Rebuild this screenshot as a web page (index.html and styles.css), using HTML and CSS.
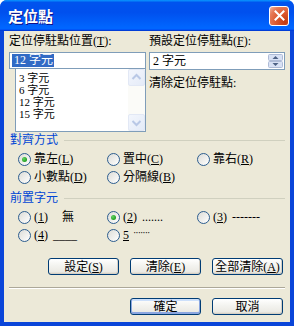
FILE: index.html
```html
<!DOCTYPE html>
<html lang="zh-Hant">
<head>
  <meta charset="UTF-8">
  <title>定位點</title>
  <link rel="stylesheet" href="styles.css">
</head>
<body>

  <div class="window">
    <div class="titlebar">
      <span class="title">定位點</span>
      <span class="close">
        <svg width="11" height="11" viewBox="0 0 11 11"><path d="M1.5 1.5 L9.5 9.5 M9.5 1.5 L1.5 9.5" stroke="#fff" stroke-width="2" stroke-linecap="square"/></svg>
      </span>
    </div>

    <div class="dialog">
      <div class="top">
        <div class="col-left">
          <div class="field-label">定位停駐點位置(<u>T</u>):</div>
          <div class="textbox"><span class="selected">12 字元</span></div>
          <div class="listbox">
            <ul class="items">
              <li>3 字元</li>
              <li>6 字元</li>
              <li>12 字元</li>
              <li>15 字元</li>
            </ul>
            <div class="scrollbar">
              <span class="sb-btn">
                <svg width="15" height="15" viewBox="0 0 15 15"><path d="M3.5 9 L7.5 5 L11.5 9" fill="none" stroke="#b9c8e6" stroke-width="2"/></svg>
              </span>
              <span class="sb-track"></span>
              <span class="sb-btn">
                <svg width="15" height="15" viewBox="0 0 15 15"><path d="M3.5 6 L7.5 10 L11.5 6" fill="none" stroke="#b9c8e6" stroke-width="2"/></svg>
              </span>
            </div>
          </div>
        </div>

        <div class="col-right">
          <div class="field-label">預設定位停駐點(<u>F</u>):</div>
          <div class="textbox spin">
            <span>2 字元</span>
            <span class="spin-btn">
              <svg width="15" height="14" viewBox="0 0 15 14">
                <rect x="0.5" y="0.5" width="14" height="6" rx="1" fill="#d8e1f4" stroke="#aebbd6"/>
                <rect x="0.5" y="7.5" width="14" height="6" rx="1" fill="#d8e1f4" stroke="#aebbd6"/>
                <path d="M7.5 2 L10.5 5 L4.5 5 Z" fill="#4d6185"/>
                <path d="M7.5 12 L10.5 9 L4.5 9 Z" fill="#4d6185"/>
              </svg>
            </span>
          </div>
          <div class="plain-label">清除定位停駐點:</div>
        </div>
      </div>

      <div class="group">
        <div class="group-head"><span>對齊方式</span></div>
        <div class="radios">
          <div class="radio"><span class="dot checked"></span>靠左(<u>L</u>)</div>
          <div class="radio"><span class="dot"></span>置中(<u>C</u>)</div>
          <div class="radio"><span class="dot"></span>靠右(<u>R</u>)</div>
          <div class="radio"><span class="dot"></span>小數點(<u>D</u>)</div>
          <div class="radio"><span class="dot"></span>分隔線(<u>B</u>)</div>
        </div>
      </div>

      <div class="group second">
        <div class="group-head"><span>前置字元</span></div>
        <div class="radios">
          <div class="radio"><span class="dot"></span>(<u>1</u>)<span class="leader none">無</span></div>
          <div class="radio"><span class="dot checked"></span>(<u>2</u>)<span class="leader">.......</span></div>
          <div class="radio"><span class="dot"></span>(<u>3</u>)<span class="leader">-------</span></div>
          <div class="radio"><span class="dot"></span>(<u>4</u>)<span class="leader">____</span></div>
          <div class="radio"><span class="dot"></span><u>5</u><span class="leader mid">·······</span></div>
        </div>
      </div>

      <div class="buttons first-row">
        <button>設定(<u>S</u>)</button>
        <button>清除(<u>E</u>)</button>
        <button>全部清除(<u>A</u>)</button>
      </div>

      <div class="separator"></div>

      <div class="buttons">
        <button class="default">確定</button>
        <button>取消</button>
      </div>
    </div>
  </div>

</body>
</html>
```

FILE: styles.css
```css
html, body {
  margin: 0;
  padding: 0;
  background: #fff;
}
body {
  font-family: "Liberation Serif", "Noto Sans CJK TC", serif;
  font-size: 12px;
  line-height: 14px;
  color: #000;
}
u {
  text-decoration: underline;
  text-underline-offset: 1px;
}

.window {
  width: 294px;
  height: 326px;
  box-sizing: border-box;
  display: flex;
  flex-direction: column;
  background: #0a45d9;
  border-radius: 7px 7px 0 0;
  overflow: hidden;
}
.titlebar {
  height: 31px;
  flex: none;
  display: flex;
  align-items: center;
  justify-content: space-between;
  padding: 0 5px 0 8px;
  background: linear-gradient(180deg, #0997ff, #0053ee 8%, #0050ee 40%, #0066ff 88%, #0066ff 93%, #005bff 95%, #003dd7 96%, #003dd7);
}
.title {
  font: bold 15px/16px "Noto Sans CJK TC", sans-serif;
  color: #fff;
  text-shadow: 1px 1px #0f1089;
}
.close {
  width: 20px;
  height: 20px;
  box-sizing: border-box;
  border: 1px solid #fff;
  border-radius: 3px;
  display: flex;
  align-items: center;
  justify-content: center;
  background: radial-gradient(circle at 85% 85%, #c13a10 0%, #dd5a30 45%, #e67a58 75%, #f3b7a2 100%);
}

.dialog {
  flex: 1;
  margin: 0 4px 4px;
  background: #ece9d8;
  padding: 3px 5px 0;
  display: flex;
  flex-direction: column;
}

.top {
  display: flex;
  gap: 3px;
}
.col-left {
  width: 137px;
}
.col-right {
  width: 136px;
}
.field-label {
  height: 14px;
  margin-bottom: 4px;
  white-space: nowrap;
}
.textbox {
  height: 17px;
  box-sizing: border-box;
  border: 1px solid #7f9db9;
  background: #fff;
  display: flex;
  align-items: center;
  padding: 0 2px;
}
.selected {
  background: #316ac5;
  color: #fff;
  line-height: 13px;
  padding: 0 1px 0 2px;
}
.spin {
  height: 18px;
  justify-content: space-between;
  padding: 0 1px 0 3px;
}
.spin-btn {
  display: flex;
}
.plain-label {
  margin-top: 6px;
}

.listbox {
  margin-left: 6px;
  height: 63px;
  box-sizing: border-box;
  border: 1px solid #7f9db9;
  border-top: none;
  background: #fff;
  display: flex;
}
.items {
  flex: 1;
  list-style: none;
  margin: 0;
  padding: 3px 0 0 3px;
}
.items li {
  height: 12px;
  font-size: 11px;
  line-height: 12px;
}
.scrollbar {
  width: 17px;
  display: flex;
  flex-direction: column;
  background: #fbfbf8;
}
.sb-btn {
  width: 17px;
  height: 17px;
  box-sizing: border-box;
  border: 1px solid #e2e8f5;
  border-radius: 2px;
  background: linear-gradient(135deg, #f3f6fd, #e4ebf8);
  display: flex;
  align-items: center;
  justify-content: center;
}
.sb-track {
  flex: 1;
}

.group {
  margin-top: 1px;
}
.group.second {
  margin-top: 7px;
}
.group-head {
  display: flex;
  align-items: center;
  padding-left: 1px;
}
.group-head span {
  color: #0046d5;
}
.group-head::after {
  content: "";
  flex: 1;
  height: 1px;
  margin-left: 6px;
  background: #d0d0bf;
}
.radios {
  margin-top: 5px;
  padding-left: 9px;
  display: grid;
  grid-template-columns: 89px 90px auto;
  grid-auto-rows: 14px;
  row-gap: 4px;
}
.radio {
  display: flex;
  align-items: center;
  white-space: nowrap;
}
.dot {
  width: 13px;
  height: 13px;
  box-sizing: border-box;
  border: 1px solid #2c5d8f;
  border-radius: 50%;
  background: linear-gradient(135deg, #dcdcd7, #fff);
  margin-right: 3px;
  display: flex;
  align-items: center;
  justify-content: center;
}
.dot.checked::after {
  content: "";
  width: 5px;
  height: 5px;
  border-radius: 50%;
  background: radial-gradient(circle at 35% 35%, #64d264, #21a121 70%);
}
.leader {
  margin-left: 5px;
}
.leader.none {
  margin-left: 14px;
}
.leader.mid {
  margin-left: 4px;
  font-size: 10px;
  letter-spacing: -1px;
  position: relative;
  top: -2px;
}

.buttons {
  display: flex;
  justify-content: flex-end;
  gap: 11px;
  padding-right: 2px;
  margin-top: 9px;
}
.buttons.first-row {
  margin-top: 16px;
}
button {
  width: 71px;
  height: 17px;
  padding: 0;
  box-sizing: border-box;
  font-family: "Liberation Serif", "Noto Sans CJK TC", serif;
  font-size: 12px;
  line-height: 14px;
  color: #000;
  border: 1px solid #003c74;
  border-radius: 3px;
  background: linear-gradient(180deg, #fff, #f3f3ef 45%, #ebeae4 85%, #d6d0c5);
  box-shadow: inset -1px -1px 0 #d6d0c5;
}
button.default {
  box-shadow: inset 0 -1px 0 1px #8ba6e0, inset 0 1px 0 1px #cde0fb;
}
.separator {
  margin-top: 12px;
  height: 0;
  border-top: 1px solid #aca899;
  border-bottom: 1px solid #fff;
}
```
